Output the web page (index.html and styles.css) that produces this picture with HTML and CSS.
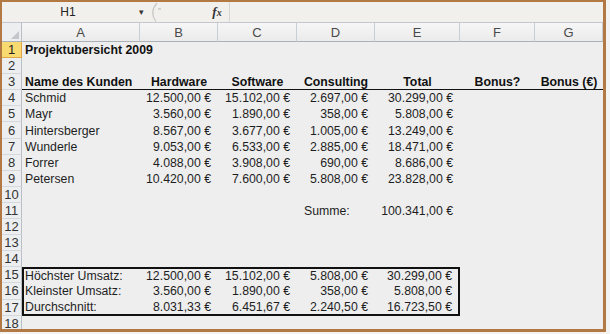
FILE: index.html
```html
<!DOCTYPE html>
<html lang="de">
<head>
<meta charset="utf-8">
<title>Projektubersicht 2009</title>
<link rel="stylesheet" href="styles.css">
</head>
<body>
<div class="frame">
  <div class="fbar">
    <div class="namebox">H1</div>
    <div class="nb-arrow">&#9662;</div>
    <div class="handle">
      <svg width="18" height="20" viewBox="0 0 18 20"><path d="M9 1 Q1 10 8 19.5" fill="none" stroke="#c9c9c9" stroke-width="1.2"/><path d="M10 7 H13" stroke="#b5b5b5" stroke-width="1"/></svg>
    </div>
    <div class="fb-gap"></div>
    <div class="fx">f<span class="fx-x">x</span></div>
    <div class="fb-input"></div>
  </div>
  <div class="sheet">
    <div class="row hdr">
      <div class="corner"><svg width="8" height="8" viewBox="0 0 8 8"><path d="M8 0 V8 H0 Z" fill="#c3c7cc"/></svg></div>
      <div class="ch">A</div><div class="ch">B</div><div class="ch">C</div><div class="ch">D</div><div class="ch">E</div><div class="ch">F</div><div class="ch">G</div>
    </div>
    <div class="row"><div class="rh sel">1</div><div class="c b">Projektubersicht 2009</div></div>
    <div class="row"><div class="rh">2</div></div>
    <div class="row line">
      <div class="rh">3</div>
      <div class="c b">Name des Kunden</div>
      <div class="c b ctr">Hardware</div>
      <div class="c b ctr">Software</div>
      <div class="c b ctr">Consulting</div>
      <div class="c b ctr">Total</div>
      <div class="c b ctr">Bonus?</div>
      <div class="c b ctr">Bonus (€)</div>
    </div>
    <div class="row"><div class="rh">4</div><div class="c">Schmid</div><div class="c r">12.500,00 €</div><div class="c r">15.102,00 €</div><div class="c r">2.697,00 €</div><div class="c r">30.299,00 €</div></div>
    <div class="row"><div class="rh">5</div><div class="c">Mayr</div><div class="c r">3.560,00 €</div><div class="c r">1.890,00 €</div><div class="c r">358,00 €</div><div class="c r">5.808,00 €</div></div>
    <div class="row"><div class="rh">6</div><div class="c">Hintersberger</div><div class="c r">8.567,00 €</div><div class="c r">3.677,00 €</div><div class="c r">1.005,00 €</div><div class="c r">13.249,00 €</div></div>
    <div class="row"><div class="rh">7</div><div class="c">Wunderle</div><div class="c r">9.053,00 €</div><div class="c r">6.533,00 €</div><div class="c r">2.885,00 €</div><div class="c r">18.471,00 €</div></div>
    <div class="row"><div class="rh">8</div><div class="c">Forrer</div><div class="c r">4.088,00 €</div><div class="c r">3.908,00 €</div><div class="c r">690,00 €</div><div class="c r">8.686,00 €</div></div>
    <div class="row"><div class="rh">9</div><div class="c">Petersen</div><div class="c r">10.420,00 €</div><div class="c r">7.600,00 €</div><div class="c r">5.808,00 €</div><div class="c r">23.828,00 €</div></div>
    <div class="row"><div class="rh">10</div></div>
    <div class="row"><div class="rh">11</div><div class="c"></div><div class="c"></div><div class="c"></div><div class="c ind">Summe:</div><div class="c r">100.341,00 €</div></div>
    <div class="row"><div class="rh">12</div></div>
    <div class="row"><div class="rh">13</div></div>
    <div class="row"><div class="rh">14</div></div>
    <div class="row"><div class="rh">15</div><div class="c bt bl">Höchster Umsatz:</div><div class="c r bt">12.500,00 €</div><div class="c r bt">15.102,00 €</div><div class="c r bt">5.808,00 €</div><div class="c r bt br">30.299,00 €</div></div>
    <div class="row"><div class="rh">16</div><div class="c bl">Kleinster Umsatz:</div><div class="c r">3.560,00 €</div><div class="c r">1.890,00 €</div><div class="c r">358,00 €</div><div class="c r br">5.808,00 €</div></div>
    <div class="row"><div class="rh">17</div><div class="c bb bl">Durchschnitt:</div><div class="c r bb">8.031,33 €</div><div class="c r bb">6.451,67 €</div><div class="c r bb">2.240,50 €</div><div class="c r bb br">16.723,50 €</div></div>
    <div class="row"><div class="rh">18</div></div>
  </div>
</div>
</body>
</html>
```
FILE: styles.css
```css
* { box-sizing: border-box; }
html, body { margin: 0; padding: 0; }
body {
  background: #f3f3f3;
  font-family: "Liberation Sans", Arial, sans-serif;
  font-size: 12.3px;
  color: #1e1e1e;
}
.frame {
  width: 606px;
  height: 332px;
  border-style: solid;
  border-color: #b27944;
  border-width: 2px 3px 3px 2px;
  background: #eeeeee;
  overflow: hidden;
}
.fbar {
  display: flex;
  height: 21px;
  background: #f2f0ed;
  border-bottom: 1px solid #c4c8ce;
  align-items: center;
}
.namebox {
  width: 132px;
  text-align: center;
  font-size: 12px;
  color: #222;
}
.nb-arrow {
  width: 14px;
  text-align: center;
  font-size: 9px;
  color: #333;
}
.handle { width: 18px; height: 20px; }
.handle svg { display: block; }
.fb-gap { width: 43px; }
.fx {
  width: 16px;
  text-align: center;
  font-family: "Liberation Serif", serif;
  font-style: italic;
  font-weight: bold;
  font-size: 13px;
  color: #333;
}
.fx-x { font-size: 10px; }
.fb-input {
  flex: 1;
  height: 20px;
  margin-left: 4px;
  border-left: 1px solid #d6d6d6;
}
.sheet { display: flex; flex-direction: column; }
.row {
  display: grid;
  grid-template-columns: 20px 118px 78px 79px 78px 85px 75px 68px;
  height: 16.1px;
  flex-shrink: 0;
}
.row.hdr { height: 19px; }
.corner {
  background: #eceef0;
  border-right: 1px solid #b8bfc7;
  border-bottom: 1px solid #aab1b9;
  display: flex;
  align-items: flex-end;
  justify-content: flex-end;
  padding: 0 2px 2px 0;
}
.corner svg { display: block; }
.ch {
  background: linear-gradient(#f6f6f6, #ebebeb);
  border-right: 1px solid #c9ced4;
  border-bottom: 1px solid #aab1b9;
  display: flex;
  align-items: center;
  justify-content: center;
  font-size: 13px;
  color: #4a4a4a;
}
.rh {
  background: #eceef0;
  border-right: 1px solid #b8bfc7;
  border-bottom: 1px solid #d4d9de;
  display: flex;
  align-items: center;
  justify-content: center;
  font-size: 13px;
  color: #333;
}
.rh.sel {
  background: #f8da70;
  border-right-color: #e2a544;
  border-bottom-color: #e2a544;
  color: #222;
}
.c {
  display: flex;
  align-items: center;
  padding: 0 3px;
  white-space: nowrap;
  min-width: 0;
}
.c.b { font-weight: bold; color: #111; }
.c.r { justify-content: flex-end; padding-right: 7px; }
.c.ctr { justify-content: center; padding: 0; }
.c.ind { padding-left: 7px; }
.line .c { border-bottom: 1px solid #111; }
.bt { border-top: 2px solid #111; }
.bb { border-bottom: 2px solid #111; }
.bl { border-left: 2px solid #111; padding-left: 1px; }
.br { border-right: 2px solid #111; }
.c.r.br { padding-right: 6px; }
```
